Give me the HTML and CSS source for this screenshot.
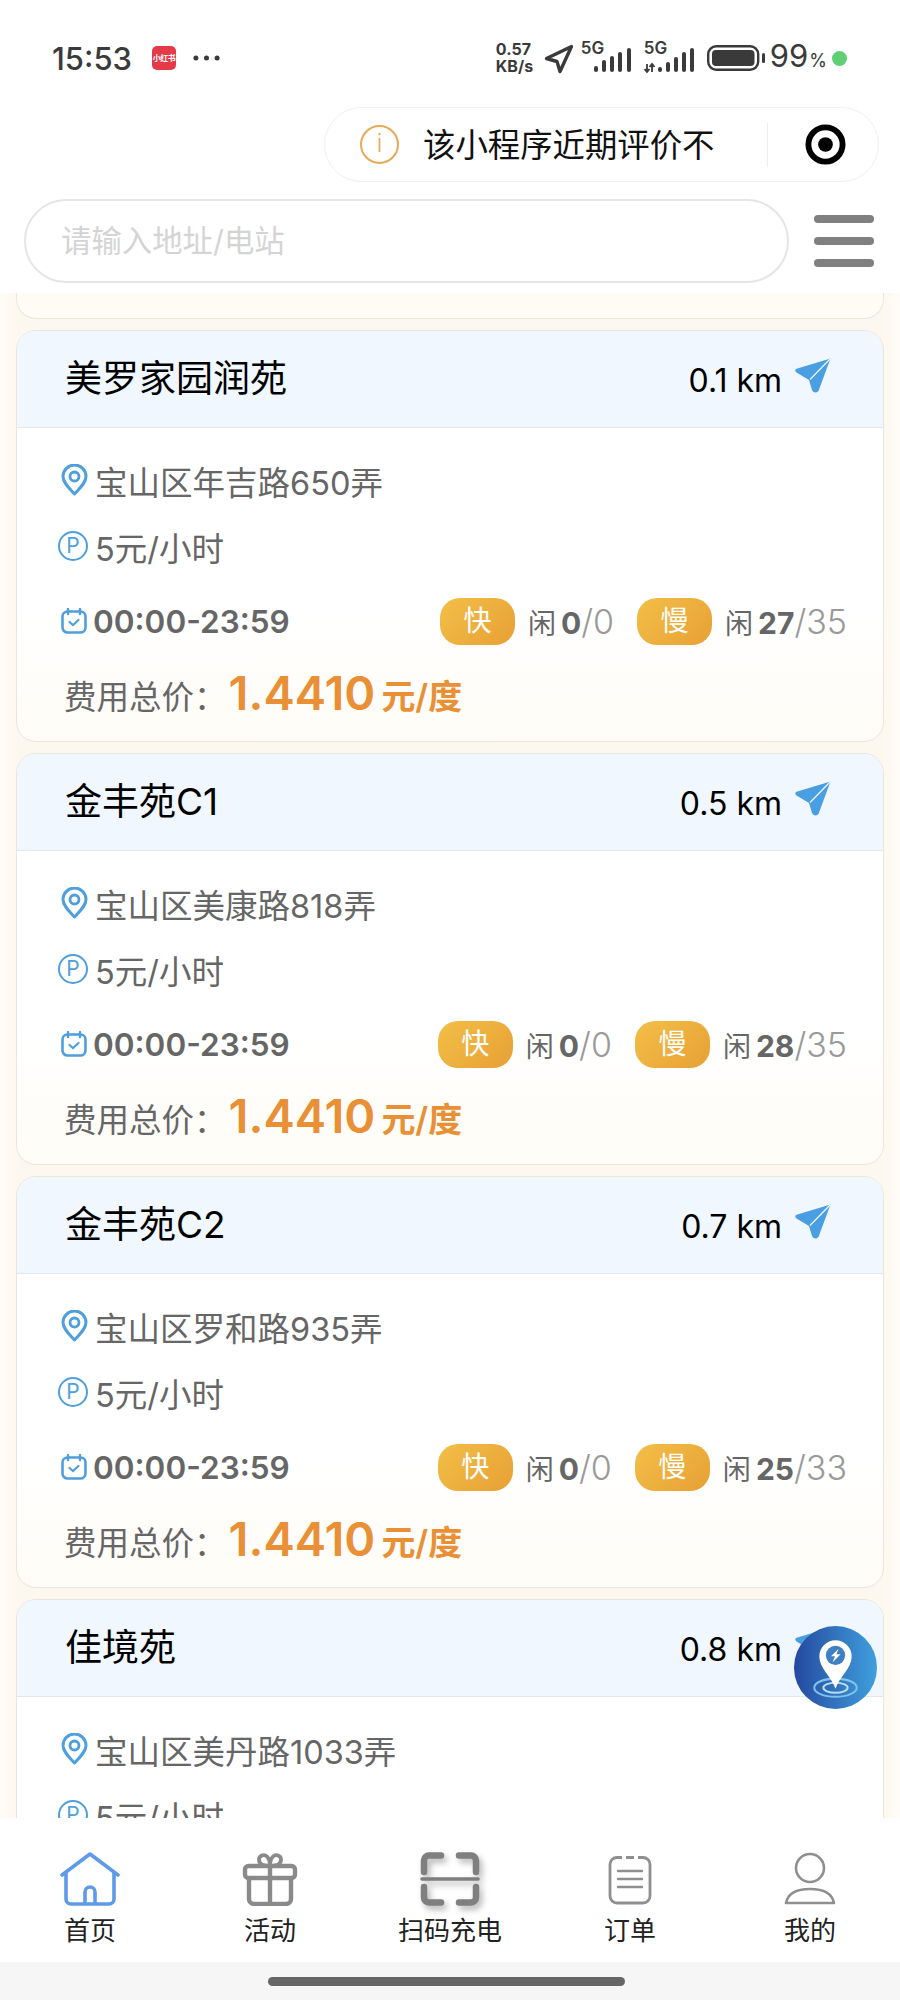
FILE: index.html
```html
<!DOCTYPE html>
<html lang="zh-CN">
<head>
  <meta charset="UTF-8" />
  <title>充电站列表</title>
  <link rel="stylesheet" href="styles.css">
</head>
<body>

<!-- shared icons -->
<svg class="icon-defs">
  <symbol id="i-send" viewBox="0 0 36 36">
    <path d="M35.500 0.500 1.500 10.800Q-1 12.500 1.500 14.500L14 22 17 32Q19.500 36.500 23.500 33Z" fill="#4a9fe3"/>
    <path d="M35 1 15 21.500" stroke="#f0f7fe" stroke-width="1.200"/>
  </symbol>
  <symbol id="i-pin" viewBox="0 0 27 32">
    <path d="M13.500 30C8 24 2 18.500 2 12.500a11.500 11.500 0 0 1 23 0C25 18.500 19 24 13.500 30Z" fill="none" stroke="#4f9fdd" stroke-width="3" stroke-linejoin="round"/>
    <circle cx="13.500" cy="12.500" r="4.500" fill="none" stroke="#4f9fdd" stroke-width="2.800"/>
  </symbol>
  <symbol id="i-clock" viewBox="0 0 26 26">
    <rect x="1.500" y="3.500" width="23" height="21" rx="5" fill="none" stroke="#4f9fdd" stroke-width="2.600"/>
    <path d="M7 1v5M19 1v5" stroke="#4f9fdd" stroke-width="2.400" stroke-linecap="round"/>
    <path d="M8.500 14l3.500 3 5.500-5" fill="none" stroke="#4f9fdd" stroke-width="2.200" stroke-linecap="round"/>
  </symbol>
</svg>

<div class="page">

  <!-- status bar -->
  <div class="status-bar">
    <div class="status-left">
      <span class="clock">15:53</span>
      <span class="app-badge">小红书</span>
      <svg class="more-dots" viewBox="0 0 28 6"><circle cx="3" cy="3" r="2.600"/><circle cx="14" cy="3" r="2.600"/><circle cx="25" cy="3" r="2.600"/></svg>
    </div>
    <div class="status-right">
      <span class="net-speed">0.57<br>KB/s</span>
      <svg class="nav-arrow" viewBox="0 0 30 30"><path d="M27.500 2.500 2.500 14.500 13 17.500 16 27.500Z" fill="none" stroke="#3a3a3a" stroke-width="3.400" stroke-linejoin="round"/></svg>
      <div class="signal">
        <span class="five-g">5G</span>
        <svg viewBox="0 0 52 30"><rect x="13" y="23" width="4" height="6" rx="2"/><rect x="21" y="17" width="4" height="12" rx="2"/><rect x="29" y="13" width="4" height="16" rx="2"/><rect x="37" y="9" width="4" height="20" rx="2"/><rect x="46" y="5" width="4" height="24" rx="2"/></svg>
      </div>
      <div class="signal">
        <span class="five-g">5G</span>
        <svg viewBox="0 0 52 30"><path d="M3 21v8M0.500 26 3 29 5.500 26M8 21v8M5.500 24 8 21 10.500 24" fill="none" stroke="#3a3a3a" stroke-width="1.800"/><rect x="14" y="24" width="4" height="5" rx="2"/><rect x="22" y="19" width="4" height="10" rx="2"/><rect x="30" y="14" width="4" height="15" rx="2"/><rect x="38" y="9" width="4" height="20" rx="2"/><rect x="46" y="5" width="4" height="24" rx="2"/></svg>
      </div>
      <svg class="battery" viewBox="0 0 58 26"><rect x="1.200" y="1.200" width="50" height="23.600" rx="8" fill="none" stroke="#3a3a3a" stroke-width="2.400"/><rect x="5" y="5" width="42.500" height="16" rx="4" fill="#3a3a3a"/><rect x="55" y="8" width="3" height="10" rx="1.500" fill="#3a3a3a"/></svg>
      <span class="battery-num">99<small>%</small></span>
      <span class="charge-dot"></span>
    </div>
  </div>

  <!-- mini program capsule -->
  <div class="capsule-row">
    <div class="capsule">
      <span class="info-icon">i</span>
      <span class="capsule-text">该小程序近期评价不</span>
      <span class="capsule-line"></span>
      <svg class="target-icon" viewBox="0 0 42 42"><circle cx="21" cy="21" r="17.500" fill="none" stroke="#000" stroke-width="6"/><circle cx="21" cy="21" r="7.500"/></svg>
    </div>
  </div>

  <!-- search -->
  <div class="search-row">
    <div class="search-box">请输入地址/电站</div>
    <div class="menu-icon"><i></i><i></i><i></i></div>
  </div>

  <!-- station list -->
  <div class="list">
    <div class="card-stub"></div>

    <div class="card">
      <div class="card-head">
        <span class="name">美罗家园润苑</span>
        <span class="distance">0.1 km<svg class="send-icon"><use href="#i-send"/></svg></span>
      </div>
      <div class="card-body">
        <div class="row row-addr"><svg class="pin-icon"><use href="#i-pin"/></svg><span>宝山区年吉路650弄</span></div>
        <div class="row row-park"><span class="park-icon">P</span><span>5元/小时</span></div>
        <div class="row row-time">
          <svg class="clock-icon"><use href="#i-clock"/></svg>
          <span class="hours">00:00-23:59</span>
          <div class="piles">
            <span class="pill">快</span><span class="idle">闲<b>0</b><em>/0</em></span>
            <span class="pill pill-slow">慢</span><span class="idle">闲<b>27</b><em>/35</em></span>
          </div>
        </div>
        <div class="row row-price"><span>费用总价：</span><span class="price">1.4410</span><span class="unit">元/度</span></div>
      </div>
    </div>

    <div class="card">
      <div class="card-head">
        <span class="name">金丰苑C1</span>
        <span class="distance">0.5 km<svg class="send-icon"><use href="#i-send"/></svg></span>
      </div>
      <div class="card-body">
        <div class="row row-addr"><svg class="pin-icon"><use href="#i-pin"/></svg><span>宝山区美康路818弄</span></div>
        <div class="row row-park"><span class="park-icon">P</span><span>5元/小时</span></div>
        <div class="row row-time">
          <svg class="clock-icon"><use href="#i-clock"/></svg>
          <span class="hours">00:00-23:59</span>
          <div class="piles">
            <span class="pill">快</span><span class="idle">闲<b>0</b><em>/0</em></span>
            <span class="pill pill-slow">慢</span><span class="idle">闲<b>28</b><em>/35</em></span>
          </div>
        </div>
        <div class="row row-price"><span>费用总价：</span><span class="price">1.4410</span><span class="unit">元/度</span></div>
      </div>
    </div>

    <div class="card">
      <div class="card-head">
        <span class="name">金丰苑C2</span>
        <span class="distance">0.7 km<svg class="send-icon"><use href="#i-send"/></svg></span>
      </div>
      <div class="card-body">
        <div class="row row-addr"><svg class="pin-icon"><use href="#i-pin"/></svg><span>宝山区罗和路935弄</span></div>
        <div class="row row-park"><span class="park-icon">P</span><span>5元/小时</span></div>
        <div class="row row-time">
          <svg class="clock-icon"><use href="#i-clock"/></svg>
          <span class="hours">00:00-23:59</span>
          <div class="piles">
            <span class="pill">快</span><span class="idle">闲<b>0</b><em>/0</em></span>
            <span class="pill pill-slow">慢</span><span class="idle">闲<b>25</b><em>/33</em></span>
          </div>
        </div>
        <div class="row row-price"><span>费用总价：</span><span class="price">1.4410</span><span class="unit">元/度</span></div>
      </div>
    </div>

    <div class="card">
      <div class="card-head">
        <span class="name">佳境苑</span>
        <span class="distance">0.8 km<svg class="send-icon"><use href="#i-send"/></svg></span>
      </div>
      <div class="card-body">
        <div class="row row-addr"><svg class="pin-icon"><use href="#i-pin"/></svg><span>宝山区美丹路1033弄</span></div>
        <div class="row row-park"><span class="park-icon">P</span><span>5元/小时</span></div>
      </div>
    </div>

    <!-- floating locate button -->
    <svg class="float-btn" viewBox="0 0 82 82">
      <defs><linearGradient id="floatGrad" x1="0" y1="0" x2="1" y2="0"><stop offset="0" stop-color="#25499f"/><stop offset="1" stop-color="#3f9fdd"/></linearGradient></defs>
      <circle cx="41" cy="41" r="41" fill="url(#floatGrad)"/>
      <ellipse cx="41" cy="61" rx="21" ry="9" fill="none" stroke="#7fc4ee" stroke-width="2"/>
      <ellipse cx="41" cy="61" rx="12" ry="5" fill="none" stroke="#b5def5" stroke-width="2"/>
      <path d="M41 62C37 50 25 42 25 30a16 16 0 0 1 32 0C57 42 45 50 41 62Z" fill="#fff"/>
      <circle cx="41" cy="29" r="9.500" fill="#3f7fc4"/>
      <path d="M44 22.500 36.500 30h4l-2.500 6L46 28h-4Z" fill="#fff"/>
    </svg>
  </div>

  <!-- tab bar -->
  <div class="tab-bar">
    <div class="tab">
      <svg class="tab-icon" viewBox="0 0 60 54"><path d="M2 23 30 2 58 23" fill="none" stroke="#5f9ae8" stroke-width="3.600" stroke-linecap="round" stroke-linejoin="round"/><path d="M6 21V47a5 5 0 0 0 5 5H49a5 5 0 0 0 5-5V21" fill="none" stroke="#5f9ae8" stroke-width="3.600"/><path d="M25 52V40a5 5 0 0 1 10 0V52" fill="none" stroke="#5f9ae8" stroke-width="3.600"/></svg>
      <span>首页</span>
    </div>
    <div class="tab">
      <svg class="tab-icon" viewBox="0 0 60 54"><rect x="5" y="14" width="50" height="12" rx="3.500" fill="none" stroke="#8a8a8a" stroke-width="4.400"/><path d="M9 26V47a5 5 0 0 0 5 5H46a5 5 0 0 0 5-5V26M30 14V52" fill="none" stroke="#8a8a8a" stroke-width="4.400"/><path d="M30 14C22 14 19 11 19 7.500S24 1.500 27 4.500 30 10 30 14C30 10 30 7.500 33 4.500S41 4 41 7.500 38 14 30 14Z" fill="none" stroke="#8a8a8a" stroke-width="3.800"/></svg>
      <span>活动</span>
    </div>
    <div class="tab">
      <svg class="tab-icon tab-scan" viewBox="0 0 60 54"><path d="M21 3.500H9a5 5 0 0 0-5 5V20M39 3.500H51a5 5 0 0 1 5 5V20M21 50.500H9a5 5 0 0 1-5-5V35M39 50.500H51a5 5 0 0 0 5-5V35" fill="none" stroke="#7f7f7f" stroke-width="6.500" stroke-linecap="round"/><path d="M2 27H58" stroke="#7f7f7f" stroke-width="3.600" stroke-linecap="round"/></svg>
      <span>扫码充电</span>
    </div>
    <div class="tab">
      <svg class="tab-icon" viewBox="0 0 60 54"><path d="M22 5.500H17a7 7 0 0 0-7 7V44a7 7 0 0 0 7 7H43a7 7 0 0 0 7-7V12.500a7 7 0 0 0-7-7H38M26 5.500H34" fill="none" stroke="#8f8f8f" stroke-width="2.800"/><path d="M18 19H42M18 27H42M18 35H42" stroke="#8f8f8f" stroke-width="2.400" stroke-linecap="round"/></svg>
      <span>订单</span>
    </div>
    <div class="tab">
      <svg class="tab-icon" viewBox="0 0 60 54"><circle cx="30" cy="16" r="14" fill="none" stroke="#8f8f8f" stroke-width="2.600"/><path d="M6 51C8 41 17 37 30 37S52 41 54 51Z" fill="none" stroke="#8f8f8f" stroke-width="2.600" stroke-linejoin="round"/></svg>
      <span>我的</span>
    </div>
  </div>

  <div class="home-bar"><i></i></div>
</div>
</body>
</html>
```

FILE: styles.css
```css
:root {
  --blue: #4f9fdd;
  --orange: #e98f35;
  --text-grey: #666;
  --dark: #3a3a3a;
}
html, body {
  margin: 0;
  padding: 0;
  background: #fff;
}
body {
  font-family: "Inter", "Noto Sans CJK SC", sans-serif;
  color: #000;
}
svg {
  display: block;
  flex: none;
}
.icon-defs {
  display: none;
}
.page {
  width: 900px;
  height: 2000px;
  display: flex;
  flex-direction: column;
  overflow: hidden;
}

/* status bar */
.status-bar {
  height: 107px;
  box-sizing: border-box;
  padding: 0 53px 0 52px;
  display: flex;
  justify-content: space-between;
  flex: none;
}
.status-left, .status-right {
  display: flex;
  align-items: center;
  height: 116px;
}
.clock {
  font-size: 31px;
  font-weight: 500;
  color: var(--dark);
  width: 100px;
}
.app-badge {
  width: 24px;
  height: 24px;
  border-radius: 5px;
  background: #e53a48;
  color: #fff;
  font-size: 8px;
  font-weight: 700;
  line-height: 24px;
  text-align: center;
  white-space: nowrap;
  letter-spacing: -0.5px;
}
.more-dots {
  width: 27px;
  height: 6px;
  margin-left: 17px;
  fill: var(--dark);
}
.net-speed {
  font-size: 16px;
  font-weight: 700;
  line-height: 17px;
  color: var(--dark);
  width: 48px;
}
.nav-arrow {
  width: 30px;
  height: 30px;
  margin-top: 2px;
}
.signal {
  position: relative;
  width: 52px;
  height: 30px;
  fill: var(--dark);
  margin-left: 7px;
  margin-top: -1px;
}
.signal + .signal {
  margin-left: 11px;
}
.five-g {
  position: absolute;
  left: 0;
  top: -3px;
  font-size: 17px;
  font-weight: 600;
  line-height: 17px;
  color: var(--dark);
}
.battery {
  width: 58px;
  height: 26px;
  margin-left: 11px;
}
.battery-num {
  font-size: 31px;
  line-height: 40px;
  color: var(--dark);
  margin-left: 5px;
  white-space: nowrap;
}
.battery-num small {
  font-size: 18px;
  margin-left: 1px;
}
.charge-dot {
  width: 15px;
  height: 15px;
  border-radius: 50%;
  background: #5fcf74;
  margin-left: 5px;
}

/* capsule */
.capsule-row {
  height: 92px;
  box-sizing: border-box;
  padding-right: 21px;
  display: flex;
  justify-content: flex-end;
  flex: none;
}
.capsule {
  width: 555px;
  height: 75px;
  box-sizing: border-box;
  border: 1.5px solid #f0f0f0;
  border-radius: 38px;
  padding-left: 35px;
  display: flex;
  align-items: center;
}
.info-icon {
  width: 39px;
  height: 39px;
  box-sizing: border-box;
  border: 2.500px solid #e8a95a;
  border-radius: 50%;
  color: #e8a95a;
  font-size: 24px;
  font-weight: 300;
  line-height: 33px;
  text-align: center;
}
.capsule-text {
  font-size: 32.400px;
  margin: -5px 0 0 24px;
  width: 344px;
  color: #111;
  white-space: nowrap;
}
.capsule-line {
  width: 1px;
  height: 44px;
  background: #eee;
}
.target-icon {
  width: 41px;
  height: 41px;
  margin-left: 37px;
}

/* search */
.search-row {
  height: 94px;
  box-sizing: border-box;
  padding-left: 24px;
  display: flex;
  flex: none;
}
.search-box {
  width: 765px;
  height: 84px;
  box-sizing: border-box;
  border: 2px solid #e6e6e6;
  border-radius: 42px;
  padding-left: 35px;
  font-size: 30.400px;
  line-height: 80px;
  color: #d4d4d4;
}
.menu-icon {
  margin-left: 25px;
  padding-top: 16px;
  display: flex;
  flex-direction: column;
  gap: 14px;
}
.menu-icon i {
  display: block;
  width: 60px;
  height: 8px;
  border-radius: 4px;
  background: #808080;
}

/* list */
.list {
  flex: 1;
  min-height: 0;
  overflow: hidden;
  position: relative;
  background: #fdf8ef;
  padding: 0 16px;
  display: flex;
  flex-direction: column;
  gap: 11px;
  box-shadow: inset 16px 0 12px -8px #fffdf8, inset -16px 0 12px -8px #fffdf8;
}
.card-stub {
  height: 26px;
  flex: none;
  box-sizing: border-box;
  border: 1px solid #ece7dc;
  border-top: 0;
  border-radius: 0 0 20px 20px;
  background: #fffcf5;
}
.card {
  height: 412px;
  flex: none;
  box-sizing: border-box;
  border: 1px solid #e9e6df;
  border-radius: 20px;
  overflow: hidden;
  background: linear-gradient(#fff 68%, #fffcf6);
}
.card-head {
  height: 97px;
  box-sizing: border-box;
  padding: 0 52px 0 48px;
  background: #f0f7fe;
  border-bottom: 1px solid #e3e8ed;
  display: flex;
  align-items: center;
  justify-content: space-between;
}
.name {
  font-size: 37px;
  margin-top: -6px;
}
.distance {
  font-size: 32px;
  margin-top: 3px;
  display: flex;
  align-items: center;
  gap: 13px;
  white-space: pre;
}
.send-icon {
  width: 36px;
  height: 36px;
  margin-top: -10px;
}
.card-body {
  padding: 32px 36px 0 42px;
}
.row {
  height: 40px;
  display: flex;
  align-items: center;
  font-size: 32.500px;
  color: var(--text-grey);
  white-space: nowrap;
}
.row-addr .pin-icon {
  width: 27px;
  height: 32px;
  margin: 0 7px 0 2px;
}
.row-park {
  margin-top: 26px;
}
.park-icon {
  width: 30px;
  height: 30px;
  box-sizing: border-box;
  border: 2px solid var(--blue);
  border-radius: 50%;
  color: var(--blue);
  font-size: 21px;
  line-height: 26px;
  text-align: center;
  margin: 0 7px 0 -1px;
}
.row-time {
  margin-top: 35px;
}
.clock-icon {
  width: 26px;
  height: 26px;
  margin: 0 6px 0 2px;
}
.hours {
  font-size: 31.500px;
  font-weight: 600;
}
.piles {
  margin-left: auto;
  display: flex;
  align-items: center;
}
.pill {
  width: 75px;
  height: 47px;
  border-radius: 20px;
  background: linear-gradient(135deg, #f2bf47, #e8a035);
  color: #fff;
  font-size: 28px;
  line-height: 47px;
  text-align: center;
  margin-right: 13px;
}
.pill-slow {
  margin-left: 23px;
}
.idle {
  font-size: 28px;
}
.idle b {
  font-size: 30px;
  font-weight: 700;
  margin-left: 5px;
}
.idle em {
  font-size: 34px;
  font-style: normal;
  color: #999;
  font-weight: 300;
}
.row-price {
  margin-top: 33px;
  padding-left: 5px;
}
.price {
  font-size: 47px;
  font-weight: 600;
  color: var(--orange);
  margin: -4px 6px 0 2px;
}
.unit {
  font-size: 34px;
  font-weight: 600;
  color: var(--orange);
}
.float-btn {
  position: absolute;
  left: 794px;
  top: 1333px;
  width: 83px;
  height: 83px;
}

/* tab bar */
.tab-bar {
  height: 144px;
  flex: none;
  box-sizing: border-box;
  padding-top: 34px;
  background: #fff;
  display: grid;
  grid-template-columns: repeat(5, 180px);
}
.tab {
  display: flex;
  flex-direction: column;
  align-items: center;
  font-size: 26px;
  line-height: 34px;
  color: #222;
}
.tab-icon {
  width: 60px;
  height: 54px;
  margin-bottom: 8px;
}
.tab-scan {
  filter: drop-shadow(3px 4px 3px #b5b5b5);
}
.home-bar {
  height: 38px;
  flex: none;
  background: #f6f6f6;
  padding-top: 15px;
  box-sizing: border-box;
}
.home-bar i {
  display: block;
  width: 357px;
  height: 9px;
  margin-left: 268px;
  border-radius: 5px;
  background: #666;
}
```
